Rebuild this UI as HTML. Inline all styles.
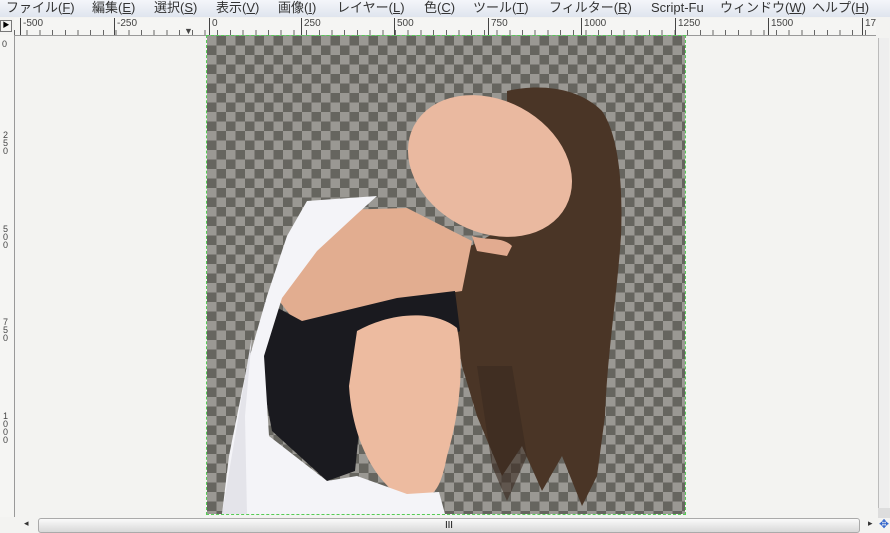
<!DOCTYPE html><html><head><meta charset="utf-8"><style>
body{margin:0;width:890px;height:532px;overflow:hidden;background:#f3f3f1;font-family:"Liberation Sans","Noto Sans CJK JP",sans-serif;position:relative}
.menu{position:absolute;left:0;top:0;width:890px;height:17px;background:linear-gradient(#f4f6fa,#dfe5ee);font-size:13px;line-height:16px;color:#333;white-space:nowrap}
.menu span{position:absolute;top:0}
.hr{position:absolute;left:14px;top:18px;width:862px;height:17px;background:#f5f5f3;border-bottom:1px solid #999;font-size:10px;color:#444;
background-image:repeating-linear-gradient(90deg,#666 0 1px,transparent 1px 12.7px);background-size:100% 5px;background-repeat:no-repeat;background-position:0 12px}
.hr b{position:absolute;top:0;font-weight:normal;border-left:1px solid #444;height:17px;padding-left:2px;line-height:12px}
.vr{position:absolute;left:0;top:35px;width:14px;height:482px;background:#f5f5f3;border-right:1px solid #999;font-size:9px;color:#444}
.canvas{position:absolute;left:207px;top:36px;width:478px;height:478px;background-color:#9a9893;
background-image:linear-gradient(45deg,#66655f 25%,transparent 25%,transparent 75%,#66655f 75%),linear-gradient(45deg,#66655f 25%,transparent 25%,transparent 75%,#66655f 75%);background-size:19px 19px;background-position:0 0,9.5px 9.5px;outline:1px dashed #5c5;overflow:hidden}
.hs{position:absolute;left:38px;top:518px;width:820px;height:13px;background:linear-gradient(#fafafa,#d8d8d8);border:1px solid #aaa;border-radius:3px;font-size:9px;text-align:center;line-height:12px}
.vs{position:absolute;left:878px;top:38px;width:10px;height:470px;background:#eee;border-left:1px solid #bbb}
</style></head><body>
<div class="menu">
<span style="left:6px">ファイル(<u>F</u>)</span><span style="left:92px">編集(<u>E</u>)</span><span style="left:154px">選択(<u>S</u>)</span><span style="left:216px">表示(<u>V</u>)</span><span style="left:278px">画像(<u>I</u>)</span><span style="left:337px">レイヤー(<u>L</u>)</span><span style="left:424px">色(<u>C</u>)</span><span style="left:473px">ツール(<u>T</u>)</span><span style="left:549px">フィルター(<u>R</u>)</span><span style="left:651px">Script-Fu</span><span style="left:720px">ウィンドウ(<u>W</u>)</span><span style="left:812px">ヘルプ(<u>H</u>)</span>
</div>
<div style="position:absolute;left:0;top:20px;width:10px;height:10px;border:1px solid #777;font-size:7px;line-height:10px;text-align:center">▶</div>
<div class="hr">
<b style="left:6px">-500</b><b style="left:100px">-250</b><b style="left:195px">0</b><b style="left:287px">250</b><b style="left:380px">500</b><b style="left:474px">750</b><b style="left:567px">1000</b><b style="left:661px">1250</b><b style="left:754px">1500</b><b style="left:848px">17</b>
<span style="position:absolute;left:170px;top:8px;font-size:9px">▼</span>
</div>
<div class="vr"><div style="position:absolute;top:4px;left:2px">0</div><div style="position:absolute;top:96px;left:3px;line-height:8px">2<br>5<br>0</div><div style="position:absolute;top:190px;left:3px;line-height:8px">5<br>0<br>0</div><div style="position:absolute;top:283px;left:3px;line-height:8px">7<br>5<br>0</div><div style="position:absolute;top:377px;left:3px;line-height:8px">1<br>0<br>0<br>0</div></div>
<div class="canvas">
<svg width="478" height="478" viewBox="0 0 478 478">
<path d="M300 55 C330 48 370 50 395 75 C412 100 416 150 414 200 C410 260 400 320 398 380 L390 440 L375 470 L355 420 L335 455 L315 410 L295 440 L270 380 L255 330 L245 270 L255 215 L300 190 Z" fill="#4a3526"/>
<path d="M270 330 L285 430 L300 465 L320 420 L305 330 Z" fill="#3a2a20" opacity=".6"/>
<path d="M95 175 L200 172 L265 205 L255 255 L190 265 L90 288 L70 262 Z" fill="#e2ad90"/>
<ellipse cx="283" cy="130" rx="86" ry="66" transform="rotate(28 283 130)" fill="#eab9a0"/>
<path d="M265 200 C280 205 295 200 305 210 L300 220 L270 215 Z" fill="#e2ab90"/>
<path d="M58 265 L95 285 L190 262 L248 255 L253 295 L200 325 L155 365 L148 435 L120 445 L65 395 L50 315 Z" fill="#1a1a1f"/>
<path d="M150 295 C180 278 225 272 250 292 C258 330 252 380 240 420 C235 445 230 460 215 462 L190 458 C165 440 145 400 142 350 Z" fill="#edbba0"/>
<path d="M100 165 L170 160 L150 178 L110 215 L75 262 L57 320 L62 400 L120 445 L150 440 L200 458 L232 456 L238 478 L15 478 L22 420 L40 330 L60 260 L80 200 Z" fill="#f4f4f8"/>
<path d="M45 300 L15 478 L40 478 L38 380 Z" fill="#e4e4ea"/>
</svg>
</div>
<div class="vs"></div>
<div style="position:absolute;left:878px;top:508px;width:12px;height:10px;background:#ddd"></div>
<div style="position:absolute;left:24px;top:518px;font-size:9px;color:#333">◂</div>
<div class="hs">Ⅲ</div>
<div style="position:absolute;left:868px;top:518px;font-size:9px;color:#333">▸</div>
<div style="position:absolute;left:879px;top:517px;font-size:12px;color:#36c">✥</div>
</body></html>
